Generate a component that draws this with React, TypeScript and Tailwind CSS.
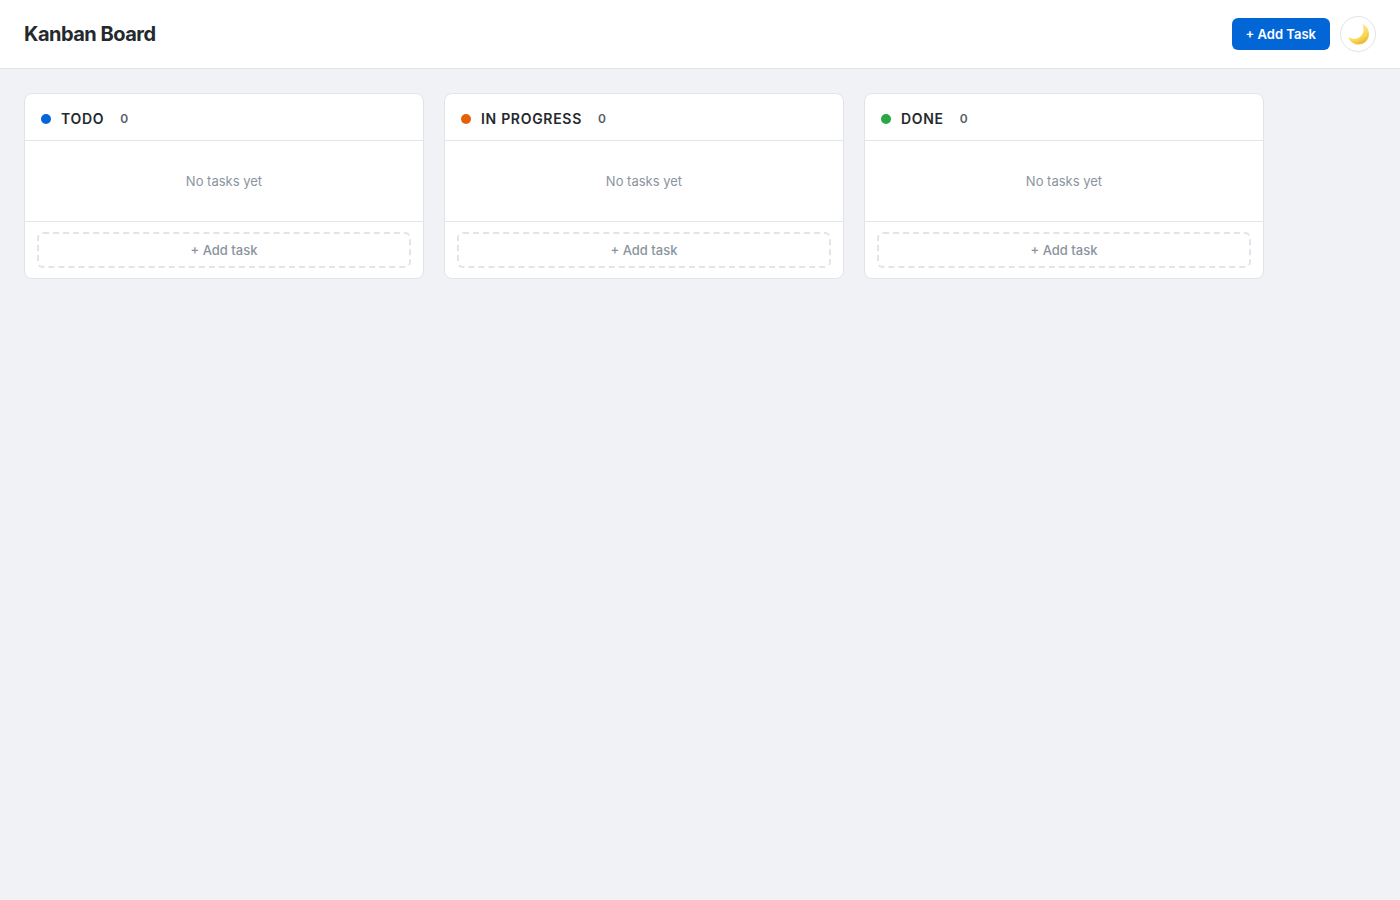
import * as React from "react";
import { useState } from "react";
import clsx from "clsx";

interface IColumn {
  id: string;
  title: string;
  dot: string;
}

const columns: IColumn[] = [
  { id: "todo", title: "Todo", dot: "bg-[#0366d6]" },
  { id: "in-progress", title: "In Progress", dot: "bg-[#e36209]" },
  { id: "done", title: "Done", dot: "bg-[#28a745]" },
];

function MoonIcon() {
  return (
    <svg viewBox="0 0 24 24" className="h-6 w-6" aria-hidden="true">
      <defs>
        <linearGradient id="moon" x1="0.35" y1="0.2" x2="0.8" y2="1">
          <stop offset="0" stopColor="#fbe58a" />
          <stop offset="0.6" stopColor="#f8d650" />
          <stop offset="1" stopColor="#e2ac2e" />
        </linearGradient>
      </defs>
      <path
        d="M17.2 2.4C20.8 4.3 23.1 7.8 23 12.2C22.8 18.1 18.4 22.5 12.5 22.5C8 22.5 4.4 20.2 2.7 16.2C2.4 15.5 2.8 15.2 3.4 15.6C7 17.8 11.8 17.2 15 13.9C17.8 10.9 18.4 6.8 16.5 3C16.2 2.4 16.6 2.1 17.2 2.4Z"
        fill="url(#moon)"
      />
      <path
        d="M6.5 19.3C11 21.6 16 20.7 19.2 17C20.6 15.4 21.5 13.4 21.7 11"
        fill="none"
        stroke="#e5b23a"
        strokeWidth="0.8"
        opacity="0.4"
      />
    </svg>
  );
}

function Column({ column, onAdd }: { column: IColumn; onAdd: (id: string) => void }) {
  return (
    <section className="min-w-0 max-w-[400px] flex-1 rounded-lg border border-[#e1e4e8] bg-white">
      <div className="flex items-center gap-2.5 border-b border-[#e1e4e8] px-4 pb-3 pt-4">
        <span className={clsx("h-2.5 w-2.5 rounded-full", column.dot)} />
        <h2 className="text-sm/[18px] font-semibold uppercase tracking-wider text-[#24292e]">{column.title}</h2>
        <span className="px-1.5 text-xs/[18px] font-semibold text-[#586069]">0</span>
      </div>
      <div className="px-3 py-8">
        <p className="text-center text-[13px]/[16px] text-[#8b949e]">No tasks yet</p>
      </div>
      <div className="border-t border-[#e1e4e8] px-3 py-2.5">
        <button
          type="button"
          onClick={() => onAdd(column.id)}
          className="h-9 w-full rounded-md border-2 border-dashed border-[#e1e4e8] text-[13px]/[16px] font-medium text-[#8b949e]"
        >
          + Add task
        </button>
      </div>
    </section>
  );
}

export default function App() {
  const [, setActiveColumn] = useState<string>("todo");
  const [dark, setDark] = useState<boolean>(false);

  return (
    <div className="min-h-screen bg-[#f0f2f6] font-['Inter',sans-serif] text-[#24292e]">
      <header className="flex items-center justify-between border-b border-[#e1e4e8] bg-white px-6 py-4">
        <h1 className="text-xl font-bold tracking-tight">Kanban Board</h1>
        <div className="flex items-center gap-2.5">
          <button
            type="button"
            onClick={() => setActiveColumn("todo")}
            className="h-8 rounded-md bg-[#0366d6] px-3.5 text-[13px]/[16px] font-semibold text-white"
          >
            + Add Task
          </button>
          <button
            type="button"
            aria-label="Toggle theme"
            aria-pressed={dark}
            onClick={() => setDark(!dark)}
            className="flex h-9 w-9 items-center justify-center rounded-full border border-[#e1e4e8] bg-white"
          >
            <MoonIcon />
          </button>
        </div>
      </header>

      <main className="flex items-start gap-5 p-6">
        {columns.map((column) => (
          <Column key={column.id} column={column} onAdd={setActiveColumn} />
        ))}
      </main>
    </div>
  );
}
